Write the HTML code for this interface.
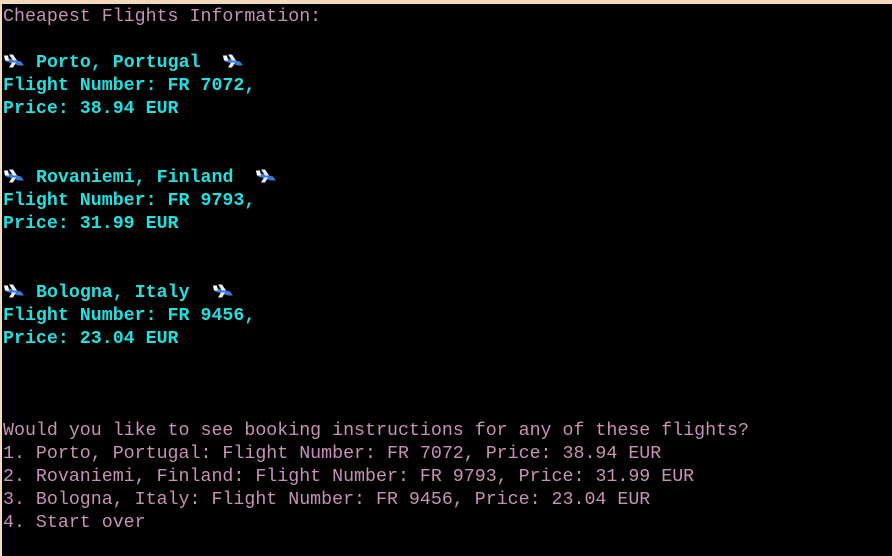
<!DOCTYPE html>
<html><head><style>
html,body{margin:0;padding:0;}
body{width:892px;height:556px;background:#f5d9bd;position:relative;overflow:hidden;}
#t{position:absolute;left:2px;top:4px;right:0;bottom:0;background:#000;}
pre{margin:0;position:absolute;left:1px;top:2px;font-family:"Liberation Mono",monospace;font-size:18.3px;line-height:23px;color:#c890b8;white-space:pre;}
.c{color:#22e0e0;font-weight:bold;}
.p{display:inline-block;width:22px;height:17px;vertical-align:-2px;}
</style></head><body><div id="t"><pre>Cheapest Flights Information:

<span class="c"><svg class="p" viewBox="0 0 22 16"><path d="M2 5 L18 9 L21 13 L16 13 L3 9 Z" fill="#3a7ad8"/><path d="M6 2 L10 2 L14 8 L10 8 Z M9 10 L13 10 L10 15 L6 15 Z" fill="#e8eef8"/><path d="M1 3 L5 3 L6 8 L2 8Z" fill="#fff"/></svg> Porto, Portugal  <svg class="p" viewBox="0 0 22 16"><path d="M2 5 L18 9 L21 13 L16 13 L3 9 Z" fill="#3a7ad8"/><path d="M6 2 L10 2 L14 8 L10 8 Z M9 10 L13 10 L10 15 L6 15 Z" fill="#e8eef8"/><path d="M1 3 L5 3 L6 8 L2 8Z" fill="#fff"/></svg>
Flight Number: FR 7072,
Price: 38.94 EUR</span>


<span class="c"><svg class="p" viewBox="0 0 22 16"><path d="M2 5 L18 9 L21 13 L16 13 L3 9 Z" fill="#3a7ad8"/><path d="M6 2 L10 2 L14 8 L10 8 Z M9 10 L13 10 L10 15 L6 15 Z" fill="#e8eef8"/><path d="M1 3 L5 3 L6 8 L2 8Z" fill="#fff"/></svg> Rovaniemi, Finland  <svg class="p" viewBox="0 0 22 16"><path d="M2 5 L18 9 L21 13 L16 13 L3 9 Z" fill="#3a7ad8"/><path d="M6 2 L10 2 L14 8 L10 8 Z M9 10 L13 10 L10 15 L6 15 Z" fill="#e8eef8"/><path d="M1 3 L5 3 L6 8 L2 8Z" fill="#fff"/></svg>
Flight Number: FR 9793,
Price: 31.99 EUR</span>


<span class="c"><svg class="p" viewBox="0 0 22 16"><path d="M2 5 L18 9 L21 13 L16 13 L3 9 Z" fill="#3a7ad8"/><path d="M6 2 L10 2 L14 8 L10 8 Z M9 10 L13 10 L10 15 L6 15 Z" fill="#e8eef8"/><path d="M1 3 L5 3 L6 8 L2 8Z" fill="#fff"/></svg> Bologna, Italy  <svg class="p" viewBox="0 0 22 16"><path d="M2 5 L18 9 L21 13 L16 13 L3 9 Z" fill="#3a7ad8"/><path d="M6 2 L10 2 L14 8 L10 8 Z M9 10 L13 10 L10 15 L6 15 Z" fill="#e8eef8"/><path d="M1 3 L5 3 L6 8 L2 8Z" fill="#fff"/></svg>
Flight Number: FR 9456,
Price: 23.04 EUR</span>



Would you like to see booking instructions for any of these flights?
1. Porto, Portugal: Flight Number: FR 7072, Price: 38.94 EUR
2. Rovaniemi, Finland: Flight Number: FR 9793, Price: 31.99 EUR
3. Bologna, Italy: Flight Number: FR 9456, Price: 23.04 EUR
4. Start over</pre></div></body></html>
